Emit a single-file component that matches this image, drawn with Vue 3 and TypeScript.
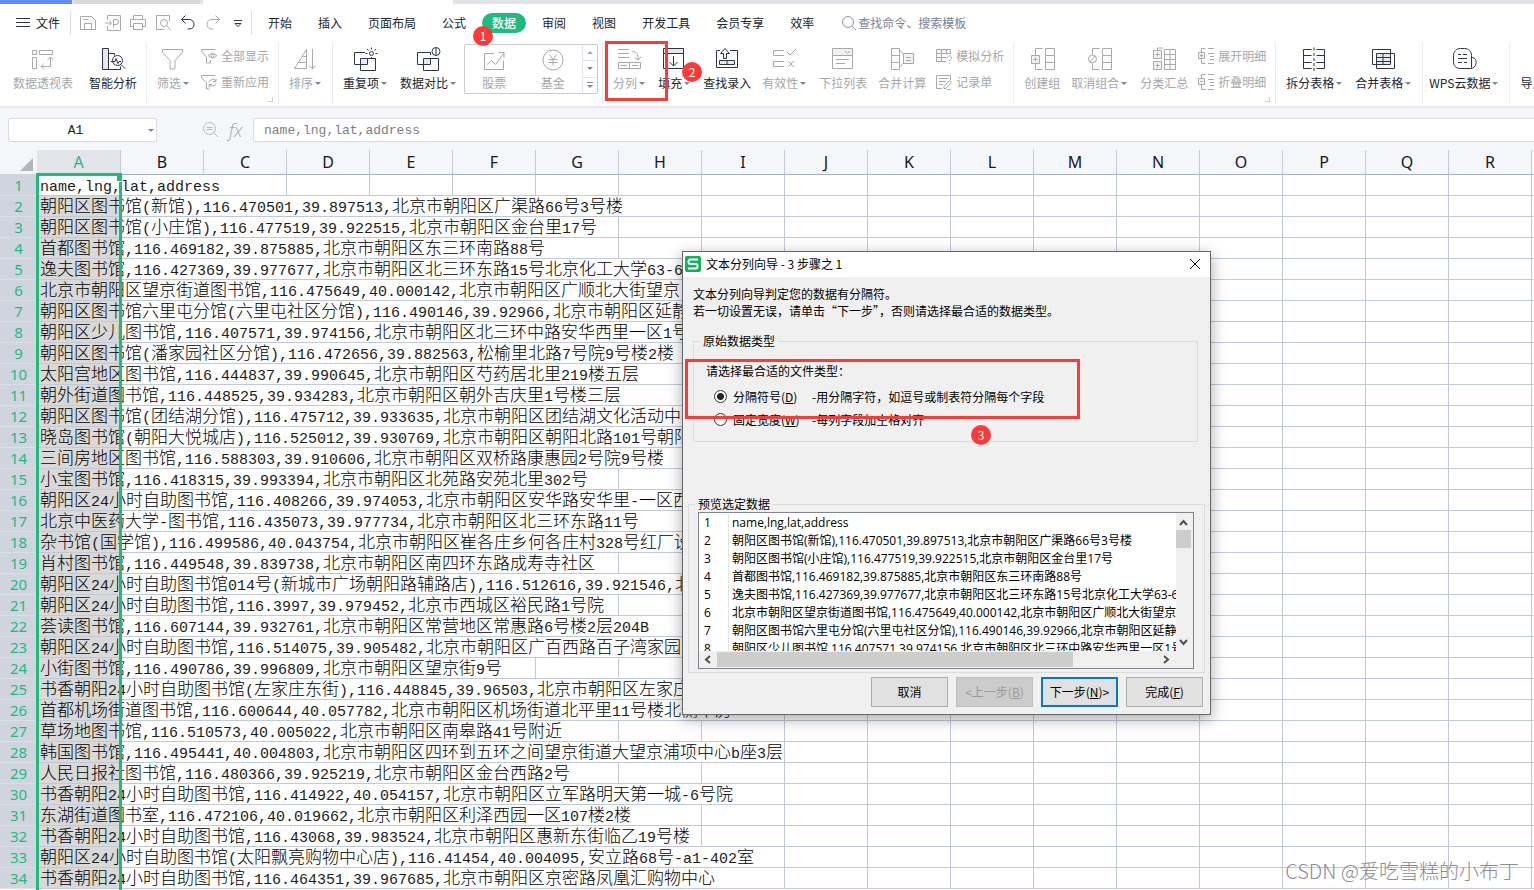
<script setup lang="ts">
import { ref } from 'vue'

interface Glyph { line: string; fill?: string }
interface Tool { label: string; icon: string; caret?: boolean; off?: boolean; wide?: boolean }
interface Group { tools?: Tool[]; stack?: Tool[]; gallery?: boolean; flush?: boolean; corner?: boolean }

const glyphs: Record<string, Glyph> = {
  pivot: { line: 'M1.5 3.5h4v4h-4zM8.5 3.5h13v4h-13zM1.5 10.5h4v11h-4zM19.5 10v9.5h-9M16.5 13l3-3 3 3M13 16.5l-3 3 3 3' },
  smart: { fill: 'M1.5 1.5h6v21h-6z', line: 'M1.5 1.5h6v21h-6zM7.5 6.5h6v2M7.5 22.5h12v-3M21.5 13.5a5 5 0 1 1-10 0a5 5 0 1 1 10 0M20 17.5l4 4M10 14.5h4l1-3 2 5 1-2h2' },
  filter: { line: 'M1.5 2.5h20v3l-7.500 8v8.500h-5v-8.500l-7.500-8z' },
  sort: { line: 'M1.500 21.500L13.500 2.500v19zM10 9.500h3.500M6 15.500h7.500M19.500 2v20M16.500 18.500l3 3.500 3-3.500' },
  repeat: { fill: 'M7.5 12.500h7v5h-7z', line: 'M12 5.5H1.500v12h13v-6M7.500 11.500h15v12h-15zM20.500 6.500a2 2 0 1 1-4 0a2 2 0 1 1 4 0M18.500 .5v2M18.500 10v1M12.500 6.500h2M22.500 6.500h2M14 2l1.500 1.500M23 2l-1.500 1.500' },
  compare: { fill: 'M7.500 12h7v5h-7z', line: 'M14.500 8V5.500H1.500v12h13v-6M7.500 11.500h15v12h-15zM24 4.500a4 4 0 1 1-8 0a4 4 0 1 1 8 0M20 .5v8' },
  stock: { line: 'M12 5.500H2.500v16h19v-9M5 16.500l4.500-4 4 4L22 5M16.500 4.500h5.500v5.500' },
  fund: { line: 'M22 12a10 10 0 1 1-20 0a10 10 0 1 1 20 0M8.500 6.500l3.500 5 3.500-5M7.500 11.500h9M7.500 14.500h9M12 11.500v6' },
  split: { line: 'M1 2.500h11M1 6.500h11M1 10.500h11M15 4.500c5 0 6 3 6 8M17.500 10l3.500 3 3-3M1.500 15.500h22v6h-22zM12.500 15.500v6M4 18.500h6M15 18.500h6' },
  fillDown: { fill: 'M1.500 1.500h20v5h-20z', line: 'M1.500 1.500h20v20h-20zM1.500 6.500h20M11.500 9v10M7.500 15l4 4 4-4' },
  lookup: { fill: 'M4.500 13.500h15v4h-15z', line: 'M5 3.500H1.500v17h21v-17H15M4.500 13.500h15v4h-15zM12 13.500v4M8.500 11.500v-5h-3l4.500-5 4.500 5h-3v5z' },
  valid: { line: 'M12 3.500H1.500v5H12M12 14.500H1.500v5H12M15 5l3 3 6-6M16 14l6 6M22 14l-6 6' },
  dropdown: { fill: 'M1.500 1.500h20v7h-20z', line: 'M1.500 1.500h20v20h-20zM1.500 8.500h20M14 4l2.500 2.500 2.500-2.500M5 12.500h13M5 16.500h9' },
  merge: { fill: 'M13.500 6.500h11v10h-11z', line: 'M1.500 1.500h8v21h-8zM1.500 8.500h8M1.500 15.500h8M9.500 3l4 4M9.500 20l4-4M13.500 6.500h10v10h-10zM16 10.500h5M16 13.500h5' },
  group: { fill: 'M1.500 8.500h8v8h-8z', line: 'M1.500 8.500h8v8h-8zM3.500 12.500h4M5.500 10.500v4M5.500 8v-6.500h7M5.500 17v5.500h7M15.500 1.500h9v21h-9zM15.500 8.500h9M15.500 15.500h9' },
  ungroup: { line: 'M9.500 12a4 4 0 1 1-8 0a4 4 0 1 1 8 0M3 15l5-6M5.500 8v-6.500h7M5.500 16.500v6h7M15.500 1.500h9v21h-9zM15.500 8.500h9M15.500 15.500h9' },
  subtotal: { fill: 'M1.500 3.500h8v8h-8zM1.500 14.500h8v8h-8z', line: 'M1.500 3.500h8v8h-8zM3.500 7.500h4M5.500 5.500v4M1.500 14.500h8v8h-8zM3.500 18.500h4M5.500 16.500v4M5.500 3v-2h6M12.500 2.500h11v20h-11zM12.500 7.500h11M12.500 12.500h11M12.500 17.500h11M18 2.500v20' },
  splitTable: { line: 'M9.500 2.500h-8v19M1.500 8.500h8M1.500 15.500h8M1.500 21.500h8M14.500 2.500h8v19h-8M14.500 8.500h8M14.500 15.500h8M12 .5v3M12 6v3M12 11v3M12 16v3M12 21v3' },
  mergeTable: { fill: 'M5.500 6.500h14v11h-14z', line: 'M19.500 6V2.500H1.500v15h4M5.500 6.500h18v15h-18zM5.500 10.500h14M5.500 14.500h14M12 6.500v11M19.500 6.500v11h-14' },
  cloud: { line: 'M18.500 21.500H8.500c-5 0-7-3-7-7v-6c0-4 3-7 7-7h4c4 0 7 3 7 7v12zM19.500 10.500c4 0 5 3 4.500 6-.5 3-2.500 5-5.500 5M6 7.500h3M11 7.500h4M6 11.500h9M6 15.500h4M12 15.500h3' },
  show: { line: 'M.5 1.500h14M.5 1.500v2l5 5.500v6h4v-3M7 7.500q4-4 9 0q-4.500 5-9 0M13 7.500a1.500 1.500 0 1 1-3 0a1.500 1.500 0 1 1 3 0' },
  reapply: { line: 'M.5 1.500h14M.5 1.500v2l5 5.500v6h3M15 7a4 4 0 0 0-7 1M15 4.500V7.500h-3M8 10.500a4 4 0 0 0 7-1M8 13.500v-3h3' },
  whatif: { fill: 'M.5 1.500h14v3h-14z', line: 'M10 13.500H.5v-12h14V6M.5 5.500h14M.5 9.500h10M5.500 1.500v12M10.500 1.500v5M11.500 10c0-3 4.500-2.500 4 0-.5 1.500-2 1.500-2 3M13.500 14.500v1' },
  form: { line: 'M14.500 6V1.500H.5v13H6M3 4.500h9M3 7.500h7M3 10.500h4M8 12.500l5.500-6 2 2-5.500 6H8zM11 15.500h4' },
  expand: { fill: 'M.5 5.500h6v5h-6z', line: 'M.5 4.500h6v6h-6zM2 7.500h3M3.500 6v3M3.500 4v-3.500h4M3.500 11v4.500h4M10 .5h6M10 5.500h6M12 8.500h4M12 11.500h4M10 15.500h6' },
  collapse: { fill: 'M.5 5.500h6v5h-6z', line: 'M.5 4.500h6v6h-6zM2 7.500h3M3.500 4v-3.500h4M3.500 11v4.500h4M10 .5h6M10 5.500h6M12 8.500h4M12 11.500h4M10 15.500h6' },
  save: { line: 'M.5 1.500h11l4 4v9H.5zM4.500 14.500v-6h7v6M3.500 4.500h5' },
  pdf: { line: 'M2.500 5V.5h13v15h-13V11M0 8h6M4 5.500L6.500 8 4 10.500M8.500 12.500v-8h2.500a2 2 0 0 1 0 5H8.500' },
  print: { line: 'M3.500 4V.5h9V4M3.500 11.500H.5v-7h15v7h-3M3.500 8.500h9v6h-9z' },
  preview: { line: 'M14.500 6V.5H1.500v14H9M12.500 8a3.500 3.500 0 1 1-7 0a3.500 3.500 0 1 1 7 0M11.500 10.500l4 4.500' },
  undo: { line: 'M5.500 .5L1.500 4.500l4 4M2 4.500h7c3.500 0 5 2.500 5 5s-1.500 4.500-5 4.500H7.500' },
  redo: { line: 'M10.500 .5l4 4-4 4M14 4.500H7c-3.500 0-5 2.500-5 5s1.500 4.500 5 4.500h1.500' },
  more: { line: 'M4 5.500h8M5 8.500l3 3 3-3z' },
}

const quick = [
  { icon: 'save', name: '保存', off: true }, { icon: 'pdf', name: '输出为PDF', off: true },
  { icon: 'print', name: '打印', off: true }, { icon: 'preview', name: '打印预览', off: true },
  { icon: 'undo', name: '撤销', off: false }, { icon: 'redo', name: '恢复', off: true },
  { icon: 'more', name: '更多', off: false },
]
const tabs = ['开始', '插入', '页面布局', '公式', '数据', '审阅', '视图', '开发工具', '会员专享', '效率']
const activeTab = ref('数据')

const groups: Group[] = [
  { tools: [{ label: '数据透视表', icon: 'pivot', off: true, wide: true }, { label: '智能分析', icon: 'smart' }] },
  {
    tools: [{ label: '筛选', icon: 'filter', caret: true, off: true }],
    stack: [{ label: '全部显示', icon: 'show', off: true }, { label: '重新应用', icon: 'reapply', off: true }],
    corner: true,
  },
  { tools: [{ label: '排序', icon: 'sort', caret: true, off: true }] },
  { tools: [{ label: '重复项', icon: 'repeat', caret: true }, { label: '数据对比', icon: 'compare', caret: true }], gallery: true },
  {
    tools: [
      { label: '分列', icon: 'split', caret: true, off: true }, { label: '填充', icon: 'fillDown', caret: true },
      { label: '查找录入', icon: 'lookup' }, { label: '有效性', icon: 'valid', caret: true, off: true },
      { label: '下拉列表', icon: 'dropdown', off: true }, { label: '合并计算', icon: 'merge', off: true },
    ],
    stack: [{ label: '模拟分析', icon: 'whatif', off: true }, { label: '记录单', icon: 'form', off: true }],
  },
  {
    tools: [
      { label: '创建组', icon: 'group', off: true }, { label: '取消组合', icon: 'ungroup', caret: true, off: true },
      { label: '分类汇总', icon: 'subtotal', off: true },
    ],
    stack: [{ label: '展开明细', icon: 'expand', off: true }, { label: '折叠明细', icon: 'collapse', off: true }],
    corner: true,
  },
  { tools: [{ label: '拆分表格', icon: 'splitTable', caret: true }, { label: '合并表格', icon: 'mergeTable', caret: true }] },
  { tools: [{ label: 'WPS云数据', icon: 'cloud', caret: true }], flush: true },
  { tools: [{ label: '导入数据', icon: '' }] },
]

const letters = 'ABCDEFGHIJKLMNOPQRS'.split('')
const records = [
  'name,lng,lat,address',
  '朝阳区图书馆(新馆),116.470501,39.897513,北京市朝阳区广渠路66号3号楼',
  '朝阳区图书馆(小庄馆),116.477519,39.922515,北京市朝阳区金台里17号',
  '首都图书馆,116.469182,39.875885,北京市朝阳区东三环南路88号',
  '逸夫图书馆,116.427369,39.977677,北京市朝阳区北三环东路15号北京化工大学63-6',
  '北京市朝阳区望京街道图书馆,116.475649,40.000142,北京市朝阳区广顺北大街望京',
  '朝阳区图书馆六里屯分馆(六里屯社区分馆),116.490146,39.92966,北京市朝阳区延静',
  '朝阳区少儿图书馆,116.407571,39.974156,北京市朝阳区北三环中路安华西里一区1号',
  '朝阳区图书馆(潘家园社区分馆),116.472656,39.882563,松榆里北路7号院9号楼2楼',
  '太阳宫地区图书馆,116.444837,39.990645,北京市朝阳区芍药居北里219楼五层',
  '朝外街道图书馆,116.448525,39.934283,北京市朝阳区朝外吉庆里1号楼三层',
  '朝阳区图书馆(团结湖分馆),116.475712,39.933635,北京市朝阳区团结湖文化活动中心',
  '晓岛图书馆(朝阳大悦城店),116.525012,39.930769,北京市朝阳区朝阳北路101号朝阳',
  '三间房地区图书馆,116.588303,39.910606,北京市朝阳区双桥路康惠园2号院9号楼',
  '小宝图书馆,116.418315,39.993394,北京市朝阳区北苑路安苑北里302号',
  '朝阳区24小时自助图书馆,116.408266,39.974053,北京市朝阳区安华路安华里-一区西',
  '北京中医药大学-图书馆,116.435073,39.977734,北京市朝阳区北三环东路11号',
  '杂书馆(国学馆),116.499586,40.043754,北京市朝阳区崔各庄乡何各庄村328号红厂设',
  '肖村图书馆,116.449548,39.839738,北京市朝阳区南四环东路成寿寺社区',
  '朝阳区24小时自助图书馆014号(新城市广场朝阳路辅路店),116.512616,39.921546,北',
  '朝阳区24小时自助图书馆,116.3997,39.979452,北京市西城区裕民路1号院',
  '荟读图书馆,116.607144,39.932761,北京市朝阳区常营地区常惠路6号楼2层204B',
  '朝阳区24小时自助图书馆,116.514075,39.905482,北京市朝阳区广百西路百子湾家园二',
  '小街图书馆,116.490786,39.996809,北京市朝阳区望京街9号',
  '书香朝阳24小时自助图书馆(左家庄东街),116.448845,39.96503,北京市朝阳区左家庄',
  '首都机场街道图书馆,116.600644,40.057782,北京市朝阳区机场街道北平里11号楼北侧平房',
  '草场地图书馆,116.510573,40.005022,北京市朝阳区南皋路41号附近',
  '韩国图书馆,116.495441,40.004803,北京市朝阳区四环到五环之间望京街道大望京浦项中心b座3层',
  '人民日报社图书馆,116.480366,39.925219,北京市朝阳区金台西路2号',
  '书香朝阳24小时自助图书馆,116.414922,40.054157,北京市朝阳区立军路明天第一城-6号院',
  '东湖街道图书室,116.472106,40.019662,北京市朝阳区利泽西园一区107楼2楼',
  '书香朝阳24小时自助图书馆,116.43068,39.983524,北京市朝阳区惠新东街临乙19号楼',
  '朝阳区24小时自助图书馆(太阳飘亮购物中心店),116.41454,40.004095,安立路68号-a1-402室',
  '书香朝阳24小时自助图书馆,116.464351,39.967685,北京市朝阳区京密路凤凰汇购物中心',
]

// Cell text spills over its empty neighbours, so the span follows the text width.
function spanOf(text: string): number {
  let width = 3
  for (const ch of text) width += ch.charCodeAt(0) < 128 ? 9 : 17
  return Math.max(1, Math.ceil((width - 84) / 83) + 1)
}
const rows = records.map((text, i) => ({
  number: i + 1,
  span: spanOf(text),
  runs: (text.match(/[\x20-\x7e]+|[^\x20-\x7e]+/g) ?? []).map((t) => ({ t, latin: t.charCodeAt(0) < 128 })),
}))
const preview = records.slice(0, 8)
const cellName = ref('A1')
const formula = ref(records[0])
const kind = ref('delimited')
</script>

<template>
  <div class="app" lang="zh-CN">
    <div class="strip"><span class="doc blue"></span><span class="doc grey"></span><span class="doc open"></span></div>

    <header class="ribbon">
      <nav class="menu">
        <button class="file">
          <svg width="14" height="12" viewBox="0 0 14 12"><path class="ink" d="M0 1.500h14M0 5.500h14M0 9.500h14" /></svg>文件
        </button>
        <div class="quick">
          <button v-for="q in quick" :key="q.icon" :class="{ off: q.off }" :aria-label="q.name">
            <svg width="16" height="16" viewBox="0 0 16 16"><path class="ink" :d="glyphs[q.icon].line" /></svg>
          </button>
        </div>
        <div class="tabs">
          <button v-for="t in tabs" :key="t" :class="{ active: t === activeTab }" @click="activeTab = t">{{ t }}</button>
        </div>
        <label class="search">
          <svg width="16" height="16" viewBox="0 0 16 16"><path class="ink" d="M12.500 7a5.500 5.500 0 1 1-11 0a5.500 5.500 0 1 1 11 0M11 11l4 4" /></svg>
          <input type="text" placeholder="查找命令、搜索模板" />
        </label>
      </nav>

      <div class="tools">
        <section v-for="(g, gi) in groups" :key="gi" class="group" :class="{ flush: g.flush }">
          <button v-for="t in g.tools" :key="t.label" class="tool" :class="{ off: t.off, drop: t.caret, wide: t.wide }">
            <svg width="26" height="24" viewBox="-1 0 26 24">
              <path v-if="glyphs[t.icon]?.fill" class="tint" :d="glyphs[t.icon].fill" />
              <path class="ink" :d="glyphs[t.icon]?.line" />
            </svg>
            <span class="label">{{ t.label }}<i v-if="t.caret" class="caret"></i></span>
          </button>
          <div v-if="g.stack" class="stack">
            <button v-for="t in g.stack" :key="t.label" :class="{ off: t.off }">
              <svg width="17" height="16" viewBox="0 0 17 16">
                <path v-if="glyphs[t.icon].fill" class="tint" :d="glyphs[t.icon].fill" />
                <path class="ink" :d="glyphs[t.icon].line" />
              </svg>{{ t.label }}
            </button>
          </div>
          <div v-if="g.gallery" class="gallery">
            <button class="off"><svg width="24" height="24" viewBox="0 0 24 24"><path class="ink" :d="glyphs.stock.line" /></svg>股票</button>
            <button class="off"><svg width="24" height="24" viewBox="0 0 24 24"><path class="ink" :d="glyphs.fund.line" /></svg>基金</button>
            <div class="spin">
              <button aria-label="上一行"><i class="caret up"></i></button>
              <button aria-label="下一行"><i class="caret"></i></button>
              <button aria-label="展开"><i class="bar"></i><i class="caret"></i></button>
            </div>
          </div>
          <i v-if="g.corner" class="corner"></i>
        </section>
      </div>
    </header>

    <div class="formula-bar">
      <label class="name-box"><input v-model="cellName" aria-label="名称框" /><i class="caret"></i></label>
      <svg class="lens" width="18" height="18" viewBox="0 0 18 18"><path class="ink" d="M13.500 7.500a6 6 0 1 1-12 0a6 6 0 1 1 12 0M12 12l4 4M4.500 6.500h6M4.500 8.500h6" /></svg>
      <span class="fx">fx</span>
      <input v-model="formula" class="formula" aria-label="编辑栏" />
    </div>

    <main class="sheet">
      <table>
        <colgroup><col class="c-num" /><col class="c-first" /><col v-for="n in letters.length - 1" :key="n" class="c-rest" /></colgroup>
        <thead>
          <tr>
            <th class="all"><svg width="13" height="13" viewBox="0 0 13 13"><path d="M13 0v13H0z" fill="#b4b6bb" /></svg></th>
            <th v-for="l in letters" :key="l" :class="{ on: l === 'A' }">{{ l }}</th>
          </tr>
        </thead>
        <tbody>
          <tr v-for="r in rows" :key="r.number">
            <th>{{ r.number }}</th>
            <td :colspan="r.span" :class="r.number === 1 ? 'current' : 'picked'">
              <div class="cell"><span v-for="(p, i) in r.runs" :key="i" :class="{ latin: p.latin }">{{ p.t }}</span></div>
            </td>
            <td v-for="n in letters.length - r.span" :key="n"></td>
          </tr>
        </tbody>
      </table>
      <div class="selection"><i class="handle"></i></div>
    </main>

    <div class="dialog" role="dialog" aria-labelledby="wizard-title">
      <div class="title">
        <svg width="16" height="16" viewBox="0 0 16 16">
          <rect width="16" height="16" rx="2" fill="#12b258" />
          <path d="M13 3.500H5.500a2 2 0 0 0-2 2v.5a2 2 0 0 0 2 2h5a2 2 0 0 1 2 2v.5a2 2 0 0 1-2 2H3" fill="none" stroke="#fff" stroke-width="2" />
        </svg>
        <span id="wizard-title">文本分列向导 - 3 步骤之 1</span>
        <button class="close" aria-label="关闭"><svg width="12" height="12" viewBox="0 0 12 12"><path d="M1 1l10 10M11 1L1 11" stroke="#111" fill="none" /></svg></button>
      </div>
      <div class="intro">文本分列向导判定您的数据有分隔符。<br />若一切设置无误，请单击“下一步”，否则请选择最合适的数据类型。</div>
      <fieldset class="types">
        <legend>原始数据类型</legend>
        <p>请选择最合适的文件类型：</p>
        <label><input v-model="kind" type="radio" value="delimited" /><span class="kind">分隔符号(<u>D</u>)</span>-用分隔字符，如逗号或制表符分隔每个字段</label>
        <label><input v-model="kind" type="radio" value="fixed" /><span class="kind">固定宽度(<u>W</u>)</span>-每列字段加空格对齐</label>
      </fieldset>
      <fieldset class="sample">
        <legend>预览选定数据</legend>
        <div class="list">
          <div class="view">
            <ol>
              <li v-for="(p, i) in preview" :key="i"><span class="idx">{{ i + 1 }}</span><span class="line">{{ p }}</span></li>
            </ol>
            <div class="vbar">
              <svg width="15" height="16" viewBox="0 0 15 16"><path d="M4 11l3.500-4 3.500 4" /></svg>
              <i class="thumb"></i>
              <svg width="15" height="16" viewBox="0 0 15 16"><path d="M4 5l3.500 4 3.500-4" /></svg>
            </div>
          </div>
          <div class="hbar">
            <svg width="18" height="15" viewBox="0 0 18 15"><path d="M11 4L7 7.500l4 3.500" /></svg>
            <span class="track"><i class="thumb"></i></span>
            <svg width="18" height="15" viewBox="0 0 18 15"><path d="M7 4l4 3.500L7 11" /></svg>
          </div>
        </div>
      </fieldset>
      <div class="actions">
        <button>取消</button>
        <button disabled>&lt;上一步(<u>B</u>)</button>
        <button class="primary">下一步(<u>N</u>)&gt;</button>
        <button>完成(<u>F</u>)</button>
      </div>
    </div>

    <i class="frame frame-tool"></i>
    <i class="frame frame-type"></i>
    <b class="mark mark-1">1</b>
    <b class="mark mark-2">2</b>
    <b class="mark mark-3">3</b>
    <div class="credit">CSDN @爱吃雪糕的小布丁</div>
  </div>
</template>

<style>
body { margin: 0; }
</style>

<style scoped>
* { box-sizing: border-box; }
.app {
  position: relative; display: flex; flex-direction: column; height: 100vh; overflow: hidden;
  background: #fff; color: #20242e; font: 12px/16px "Noto Sans CJK SC", "Noto Sans", sans-serif;
}
button { padding: 0; border: 0; background: none; color: inherit; font: inherit; white-space: nowrap; }
input { font: inherit; color: inherit; }
svg { display: block; flex: none; }
.ink { fill: none; stroke: #2e3547; }
.tint { fill: #e6e8ec; }
.off { color: #a6a6a8; }
.off .ink { stroke: #a9a9ab; }
.off .tint { fill: #f1f1f2; }
.caret { display: inline-block; flex: none; border: 3px solid transparent; border-top-color: #7d879c; border-bottom: 0; }
.caret.up { border-top: 0; border-bottom: 3px solid #a3aabd; }

.strip { display: flex; flex: none; gap: 3px; height: 4px; background: #e2e3e8; }
.doc.blue { width: 72px; background: #5e8df7; }
.doc.grey { width: 125px; background: #d8dade; }
.doc.open { width: 250px; background: #fff; }

.ribbon { flex: none; height: 104px; border-bottom: 2px solid #e9eaed; background: #fff; }
.menu { display: flex; align-items: center; height: 38px; }
.file { display: flex; align-items: center; gap: 6px; padding: 0 10px 0 16px; }
.quick { display: flex; align-items: center; height: 24px; padding: 0 1px 0 4px; border: solid #dcdee4; border-width: 0 1px; }
.quick button { display: flex; justify-content: center; width: 25px; }
.tabs { display: flex; padding-left: 3px; }
.tabs button { height: 20px; margin: 0 3px; padding: 0 10px; border-radius: 10px; line-height: 20px; }
.tabs .active { background: #1fbb7d; color: #fff; font-weight: 500; }
.search { display: flex; align-items: center; gap: 1px; margin-left: 14px; }
.search .ink { stroke: #8a94ad; }
.search input { width: 140px; padding: 0; border: 0; outline: 0; }
.search input::placeholder { color: #78829c; opacity: 1; }

.tools { display: flex; height: 62px; padding-left: 3px; overflow: hidden; }
.group { position: relative; display: flex; flex: none; padding: 0 4px; border-right: 1px solid #ebecef; }
.group.flush { padding-left: 0; }
.tool { display: flex; flex-direction: column; align-items: center; gap: 4px; padding: 5px 5px 0 6px; }
.tool.drop { padding-right: 7px; }
.tool.wide { padding-right: 10px; }
.label { display: flex; align-items: center; gap: 2px; }
.stack { display: flex; flex-direction: column; gap: 10px; padding: 6px 5px 0; }
.stack button { display: flex; align-items: center; gap: 3px; }
.corner { position: absolute; right: 5px; bottom: 2px; width: 5px; height: 5px; border: solid #c9cfdd; border-width: 0 1px 1px 0; }
.gallery { display: flex; width: 134px; height: 50px; margin: 2px 0 0 1px; border: 1px solid #c8cacf; border-radius: 2px; }
.gallery > button { display: flex; flex: 1; flex-direction: column; align-items: center; gap: 3px; padding-top: 3px; }
.spin { display: flex; flex-direction: column; width: 15px; border-left: 1px solid #e1e3e8; }
.spin button { display: flex; flex: 1; flex-direction: column; align-items: center; justify-content: center; gap: 2px; }
.spin button + button { border-top: 1px solid #e1e3e8; }
.bar { width: 6px; height: 1px; background: #7d879c; }

.formula-bar { display: flex; flex: none; align-items: center; height: 42px; padding-top: 2px; background: #f5f6f9; }
.name-box { display: flex; align-items: center; width: 149px; height: 24px; margin: 0 45px 0 8px; padding-right: 2px; border: 1px solid #d9dbe0; border-radius: 2px; background: #fff; }
.name-box input { flex: 1; min-width: 0; padding: 2px 6px 0 0; border: 0; outline: 0; background: none; text-align: center; font: 13px/20px "Liberation Mono", monospace; }
.lens .ink { stroke: #b6b8bd; }
.fx { width: 33px; padding-left: 9px; color: #a4a6ab; font: italic 18px/20px "Open Sans", sans-serif; font-weight: 300; }
.formula { flex: 1; min-width: 0; height: 24px; padding: 0 10px; border: 1px solid #d9dbe0; border-right: 0; border-radius: 2px 0 0 2px; outline: 0; background: #fff; color: #7e7e80; font: 13px/20px "Liberation Mono", monospace; }

.sheet { position: relative; flex: 1; min-height: 0; overflow: hidden; }
table { width: 1px; table-layout: fixed; border-collapse: separate; border-spacing: 0; }
.c-num { width: 37px; }
.c-first { width: 84px; }
.c-rest { width: 83px; }
th { padding: 0; font: 16px/20px "Noto Sans", sans-serif; }
thead th { height: 25px; border-right: 1px solid #c3cadb; border-bottom: 1px solid #a7b0ca; background: #f5f6f9; color: #14171f; }
thead .on { background: #e3e4ea; color: #1fbb7d; }
thead .all { border-right: 0; border-bottom-color: #cfd4de; }
.all svg { margin: 4px 0 0 20px; }
tbody th { height: 21px; border-bottom: 1px solid #dbdfe8; background: #d0d4de; color: #1fbb7d; font-size: 15px; }
td { height: 21px; padding: 0; border: solid #c0c8dc; border-width: 0 1px 1px 0; }
.cell { height: 20px; padding: 3px 0 0 3px; color: #000; font: 300 17px/17px "Liberation Mono", "Noto Sans CJK SC", monospace; white-space: nowrap; }
.picked { background: linear-gradient(90deg, #d9d9d9 84px, #fff 84px); }
.latin { color: #1c1c1c; font-size: 15px; line-height: 1; }
.selection { position: absolute; top: 23px; bottom: -3px; left: 36px; width: 86px; border: 3px solid #1fbb7d; }
.handle { position: absolute; top: 0; right: -4px; width: 7px; height: 6px; border: solid #fff; border-width: 0 1px 1px; background: #1fbb7d; }

.dialog { position: absolute; top: 251px; left: 682px; width: 529px; border: 1px solid #66676a; background: #f0f0f0; color: #000; box-shadow: 0 4px 14px rgba(0, 0, 0, .35); }
.title { display: flex; align-items: center; gap: 5px; height: 25px; padding: 0 9px 1px 2px; background: #fff; }
.close { margin-left: auto; }
.intro { padding: 8px 10px 0; line-height: 17px; }
fieldset { min-width: 0; margin: 0; padding: 0; border: 1px solid #dcdcdc; }
legend { padding: 0 3px; line-height: 16px; }
.types { height: 109px; margin: 14px 12px 0 10px; }
.types legend { margin-left: 6px; }
.types p { margin: 14px 0 0 12px; }
.types label { display: flex; align-items: center; height: 23px; padding-left: 20px; }
.types p + label { margin-top: 6px; }
.types input { width: 13px; height: 13px; margin: 0 6px 0 0; border: 1px solid #333; border-radius: 50%; appearance: none; background: #fff; }
.types input:checked { background: radial-gradient(#222 0 3px, #fff 4px); }
.kind { width: 79px; }
.sample { margin: 54px 5px 0; padding: 0 10px 3px 9px; }
.sample legend { margin-left: -3px; }
.list { height: 157px; border: 1px solid #7f858f; background: #fff; font-family: "Open Sans", "Noto Sans CJK SC", sans-serif; }
.view { display: flex; height: 138px; }
ol { flex: 1; min-width: 0; height: 138px; margin: 0; padding: 1px 0 0; overflow: hidden; list-style: none; }
li { display: flex; height: 18px; line-height: 18px; }
.idx { flex: none; width: 30px; padding-left: 5px; border-right: 1px solid #e3e3e3; }
.line { padding-left: 3px; white-space: nowrap; }
.vbar { display: flex; flex: none; flex-direction: column; width: 17px; padding: 1px 2px 0 0; background: #f0f0f0; }
.vbar svg:last-child { margin-top: auto; }
.list path { fill: none; stroke: #505050; stroke-width: 2; }
.thumb { display: block; background: #cdcdcd; }
.vbar .thumb { width: 15px; height: 18px; }
.hbar { display: flex; align-items: center; height: 17px; padding-right: 18px; background: #f0f0f0; }
.track { flex: 1; }
.track .thumb { width: 81%; height: 15px; }
.actions { display: flex; justify-content: flex-end; gap: 8px; padding: 4px 7px 7px; }
.actions button { width: 77px; height: 30px; border: 1px solid #adadad; background: #e1e1e1; }
.actions button:disabled { border-color: #bfbfbf; background: #ccc; color: #9b9b9b; }
.actions .primary { border: 2px solid #0078d7; }

.frame { position: absolute; border: 3px solid #fc3a37; }
.frame-tool { top: 41px; left: 605px; width: 63px; height: 60px; }
.frame-type { top: 359px; left: 685px; width: 395px; height: 60px; }
.mark { position: absolute; width: 20px; height: 20px; border-radius: 50%; background: #fc3a37; color: #fff; font-weight: 400; line-height: 20px; text-align: center; }
.mark-1 { top: 26px; left: 473px; }
.mark-2 { top: 62px; left: 682px; }
.mark-3 { top: 425px; left: 971px; }
.credit { position: absolute; right: 15px; bottom: 5px; color: #8b8d93; font-size: 20px; font-weight: 300; line-height: 28px; }
</style>
